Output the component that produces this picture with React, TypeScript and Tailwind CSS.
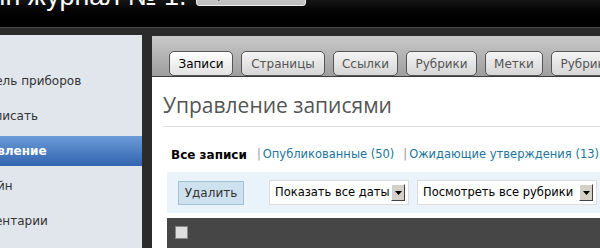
import React from 'react';

const menu = [
  { label: 'Панель приборов', shift: 'ml-[-29px]' },
  { label: 'Написать', shift: 'ml-[-22px]' },
  { label: 'Управление', shift: 'ml-[-37px]', active: true },
  { label: 'Дизайн', shift: 'ml-[-34px]' },
  { label: 'Комментарии', shift: 'ml-[-39px]' },
];

const tabs = [
  { label: 'Записи', w: 'w-[64px]', active: true },
  { label: 'Страницы', w: 'w-[84px]' },
  { label: 'Ссылки', w: 'w-[65px]' },
  { label: 'Рубрики', w: 'w-[71px]' },
  { label: 'Метки', w: 'w-[58px]' },
  { label: 'Рубрики', w: 'w-[71px]' },
];

const Select: React.FC<{ label: string; w: string }> = ({ label, w }) => (
  <div className={`${w} h-[25px] bg-white border border-[#dcdcdc] flex items-center justify-between pl-[5px] pr-[3px]`}>
    <span className="text-[11.5px] text-black whitespace-nowrap">{label}</span>
    <span className="w-[14px] h-[17px] bg-[#d4d0c8] border border-t-white border-l-white border-r-[#404040] border-b-[#404040] flex items-center justify-center">
      <svg width="7" height="4" viewBox="0 0 7 4">
        <path d="M0 0h7L3.5 4z" fill="#000" />
      </svg>
    </span>
  </div>
);

export default function App() {
  return (
    <div className="w-[600px] h-[248px] overflow-hidden bg-[#2b2b2b] font-['DejaVu_Sans',sans-serif]">
      {/* header */}
      <div className="h-[28px] bg-gradient-to-b from-[#151515] to-[#000] border-b border-[#4a4a4a] flex items-start overflow-hidden">
        <div className="ml-[-62px] mt-[-21px] text-[27px] leading-[34px] text-white font-['Liberation_Sans',sans-serif] whitespace-nowrap">
          Админ журнал № 1.
        </div>
        <div className="ml-[9px] mt-[-18px] w-[110px] h-[24px] rounded-[3px] bg-gradient-to-b from-[#e0e0e0] to-[#bdbdbd] border border-[#eeeeee] text-[11px] text-[#333] flex items-end justify-center pb-[1px]">
          Перейти на сайт
        </div>
      </div>

      <div className="flex pt-[7px] h-[220px]">
        {/* sidebar */}
        <div className="w-[142px] shrink-0 bg-[#e1e6ed] pt-[31px] overflow-hidden">
          <div className="flex flex-col gap-[5px]">
            {menu.map((m) => (
              <div
                key={m.label}
                className={`h-[30px] flex items-center whitespace-nowrap text-[12px] ${
                  m.active
                    ? 'bg-gradient-to-b from-[#6b9bd7] to-[#3264b0] text-white font-bold'
                    : 'text-[#333]'
                }`}
              >
                <span className={m.shift}>{m.label}</span>
              </div>
            ))}
          </div>
        </div>

        {/* main */}
        <div className="ml-[10px] mt-[1px] w-[600px] shrink-0 flex flex-col">
          <div className="h-[58px] bg-gradient-to-b from-[#c9c9c9] to-[#9e9e9e] border-b border-[#3a3a3a] pt-[15px] pl-[17px] flex items-start gap-2">
            {tabs.map((t, i) => (
              <div
                key={i}
                className={`${t.w} h-[25px] shrink-0 rounded-[5px] border border-[#555] flex items-center justify-center text-[12px] ${
                  t.active
                    ? 'bg-gradient-to-b from-white to-[#e2e2e2] text-black'
                    : 'bg-gradient-to-b from-[#f4f4f4] to-[#d6d6d6] text-[#555]'
                }`}
              >
                {t.label}
              </div>
            ))}
          </div>

          <div className="bg-white flex-1 pl-[11px] pt-[13px]">
            <h1 className="font-['Open_Sans',sans-serif] text-[21px] leading-[30px] text-[#555] whitespace-nowrap">
              Управление записями
            </h1>
            <div className="mt-[6px] border-t border-[#dfdfdf]" />

            <div className="mt-[20px] ml-[8px] h-[16px] flex items-center text-[11.5px] whitespace-nowrap">
              <span className="font-bold text-black text-[12px]">Все записи</span>
              <span className="ml-[10px] mr-[2px] text-[#999]">|</span>
              <span className="text-[#21759b]">Опубликованные (50)</span>
              <span className="ml-[9px] mr-[2px] text-[#999]">|</span>
              <span className="text-[#21759b]">Ожидающие утверждения (13)</span>
            </div>

            <div className="mt-[9px] ml-[4px] h-[41px] bg-[#eaf2fa] flex items-center pl-[11px]">
              <div className="w-[66px] h-[24px] bg-[#cee1ef] border border-[#9fc1da] text-[12px] text-[#333] flex items-center justify-center">
                Удалить
              </div>
              <div className="ml-[25px]">
                <Select label="Показать все даты" w="w-[140px]" />
              </div>
              <div className="ml-[8px]">
                <Select label="Посмотреть все рубрики" w="w-[180px]" />
              </div>
            </div>

            <div className="mt-[5px] ml-[4px] h-[30px] bg-[#464646] pl-[8px] pt-[8px]">
              <div className="w-[13px] h-[13px] bg-[#ddd] border border-[#888]" />
            </div>
          </div>
        </div>
      </div>
    </div>
  );
}
